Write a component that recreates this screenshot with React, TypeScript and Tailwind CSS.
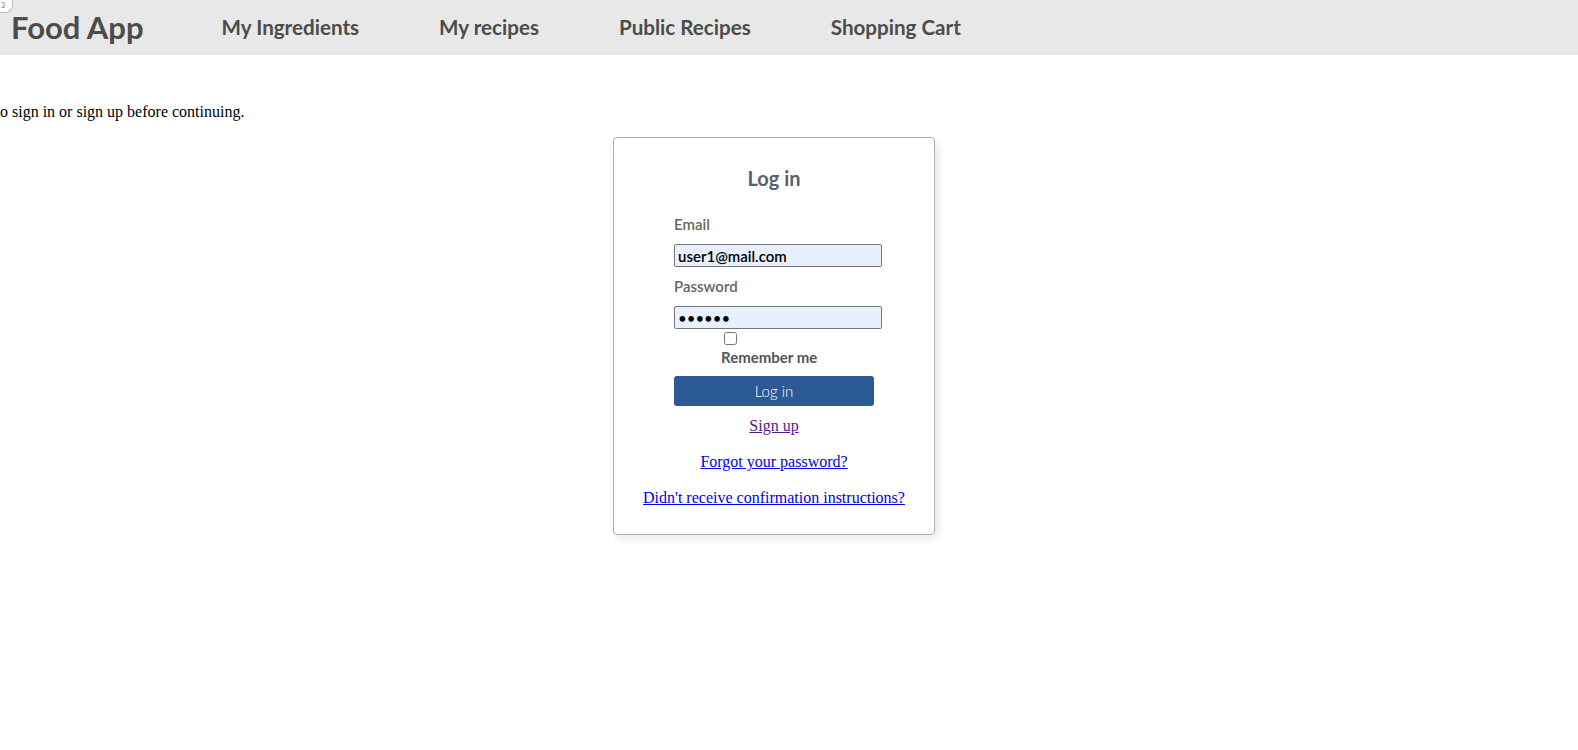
import React from "react";

export default function App() {
  return (
    <div className="relative min-h-[750px] bg-white" style={{ fontFamily: '"Liberation Serif", serif' }}>
      <div className="absolute left-0 top-0 z-10 flex h-[13px] w-[13px] items-start justify-start rounded-br-[8px] border-b border-r border-[#bbb] bg-white pl-[1px] text-[7px] leading-[10px] text-[#777]" style={{ fontFamily: 'Lato, sans-serif' }}>3</div>
      <header className="flex h-[55px] items-center gap-[78px] bg-[#e8e8e8] pb-[2px] pl-[11px] font-bold text-[#4c4c4c]" style={{ fontFamily: 'Lato, sans-serif' }}>
        <span className="text-[31px] leading-[36px]">Food App</span>
        <nav className="flex items-center gap-[80px] pt-[1px] text-[20.6px] leading-[24px]">
          <span>My Ingredients</span>
          <span>My recipes</span>
          <span>Public Recipes</span>
          <span>Shopping Cart</span>
        </nav>
      </header>
      <p className="mt-[48px] h-[18px] text-[16px] leading-[18px] text-black">o sign in or sign up before continuing.</p>
      <div className="ml-[613px] mt-[16px] w-[322px] h-[398px] rounded-[4px] border border-[#b0b0b0] bg-white pt-[28px] shadow-[4px_4px_10px_rgba(0,0,0,0.09)]">
        <h2 className="text-center text-[20px] leading-[24px] font-bold text-[#57616c]" style={{ fontFamily: 'Lato, sans-serif' }}>Log in</h2>
        <div className="mt-[25px] pl-[60px]" style={{ fontFamily: 'Lato, sans-serif' }}>
          <label className="block text-[15px] leading-[18px] font-semibold text-[#666]">Email</label>
          <input
            type="email"
            defaultValue="user1@mail.com"
            className="mt-[11px] block h-[23px] w-[208px] rounded-[2px] border border-[#767676] bg-[#e8f0fe] px-[3px] text-[15px] font-semibold text-black outline-none"
            style={{ fontFamily: 'Lato, sans-serif' }}
          />
          <label className="mt-[10px] block text-[15px] leading-[18px] font-semibold text-[#666]">Password</label>
          <input
            type="password"
            defaultValue="123456"
            className="mt-[11px] block h-[23px] w-[208px] rounded-[2px] border border-[#767676] bg-[#e8f0fe] px-[3px] text-[15px] text-black outline-none"
            style={{ fontFamily: 'Lato, sans-serif' }}
          />
          <input type="checkbox" className="ml-[50px] mt-[3px] block h-[13px] w-[13px]" />
          <div className="ml-[47px] mt-[3px] text-[15px] leading-[18px] font-bold text-[#555]">Remember me</div>
          <button className="mt-[10px] block h-[30px] w-[200px] rounded-[3px] bg-[#2c5a94] text-[15px] font-light leading-[30px] text-white">Log in</button>
        </div>
        <div className="mt-[11px] flex flex-col items-center gap-[18px] text-[16px] leading-[18px]">
          <a href="#" className="text-[#551a8b] underline">Sign up</a>
          <a href="#" className="text-[#0000ee] underline">Forgot your password?</a>
          <a href="#" className="text-[#0000ee] underline">Didn't receive confirmation instructions?</a>
        </div>
      </div>
    </div>
  );
}
